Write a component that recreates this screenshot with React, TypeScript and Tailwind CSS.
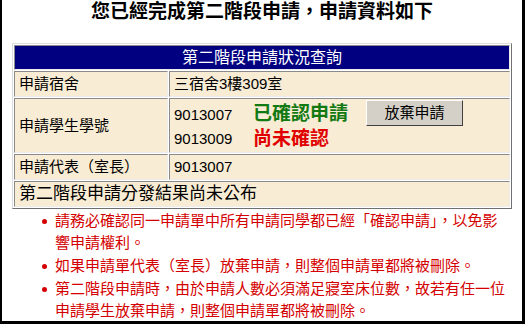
import React from 'react';

const notes: string[] = [
  '請務必確認同一申請單中所有申請同學都已經「確認申請」，以免影響申請權利。',
  '如果申請單代表（室長）放棄申請，則整個申請單都將被刪除。',
  '第二階段申請時，由於申請人數必須滿足寢室床位數，故若有任一位申請學生放棄申請，則整個申請單都將被刪除。',
];

const cell =
  'border border-t-[#8a8a8a] border-l-[#8a8a8a] border-r-[#ececec] border-b-[#ececec] px-[4px] align-middle';

export default function App() {
  return (
    <div className="w-[525px] h-[324px] bg-white border-l-2 border-r-[3px] border-b-[3px] border-black font-['Liberation_Sans','Noto_Sans_CJK_TC',sans-serif] text-black overflow-hidden">
      {/* Title */}
      <h1 className="text-center text-[19px] font-bold leading-[24px]">
        您已經完成第二階段申請，申請資料如下
      </h1>

      {/* Status table */}
      <table className="mt-[19px] mx-auto w-[500px] border-separate border-spacing-px border border-t-[#dcdcdc] border-l-[#dcdcdc] border-r-[#707070] border-b-[#707070] bg-white">
        <tbody>
          <tr>
            <td colSpan={2} className={`${cell} h-[25px] bg-[#000080] text-white text-center text-[16px] leading-[20px]`}>
              第二階段申請狀況查詢
            </td>
          </tr>
          <tr className="bg-[#f8ecd4] text-[15px] leading-[20px]">
            <td className={`${cell} h-[26px] w-[154px]`}>申請宿舍</td>
            <td className={cell}>三宿舍3樓309室</td>
          </tr>
          <tr className="bg-[#f8ecd4] text-[15px] leading-[20px]">
            <td className={`${cell} h-[55px]`}>申請學生學號</td>
            <td className={cell}>
              <div className="flex flex-col">
                <div className="flex items-center h-[26px]">
                  <span className="w-[79px] pt-[4px]">9013007</span>
                  <span className="text-[19px] font-bold text-[#137a13] pt-[2px]">已確認申請</span>
                  <button className="ml-[18px] w-[97px] h-[26px] bg-[#d4d0c8] border border-t-white border-l-white border-r-[#404040] border-b-[#404040] text-[15px] leading-[20px]">
                    放棄申請
                  </button>
                </div>
                <div className="flex items-center h-[26px]">
                  <span className="w-[79px]">9013009</span>
                  <span className="text-[19px] font-bold text-[#e00000]">尚未確認</span>
                </div>
              </div>
            </td>
          </tr>
          <tr className="bg-[#f8ecd4] text-[15px] leading-[20px]">
            <td className={`${cell} h-[26px]`}>申請代表（室長）</td>
            <td className={cell}>9013007</td>
          </tr>
          <tr className="bg-[#f8ecd4] text-[17px] leading-[20px]">
            <td colSpan={2} className={`${cell} h-[26px]`}>
              第二階段申請分發結果尚未公布
            </td>
          </tr>
        </tbody>
      </table>

      {/* Notes */}
      <ul className="pl-[40px] pt-[1px] text-[15px] leading-[22px] text-[#d40000]">
        {notes.map((n, i) => (
          <li key={i} className="flex mb-[1px]">
            <span className="w-[13px] shrink-0 flex pt-[9px]">
              <span className="w-[5px] h-[5px] rounded-full bg-[#d40000]" />
            </span>
            <span className="w-[456px]">{n}</span>
          </li>
        ))}
      </ul>
    </div>
  );
}
